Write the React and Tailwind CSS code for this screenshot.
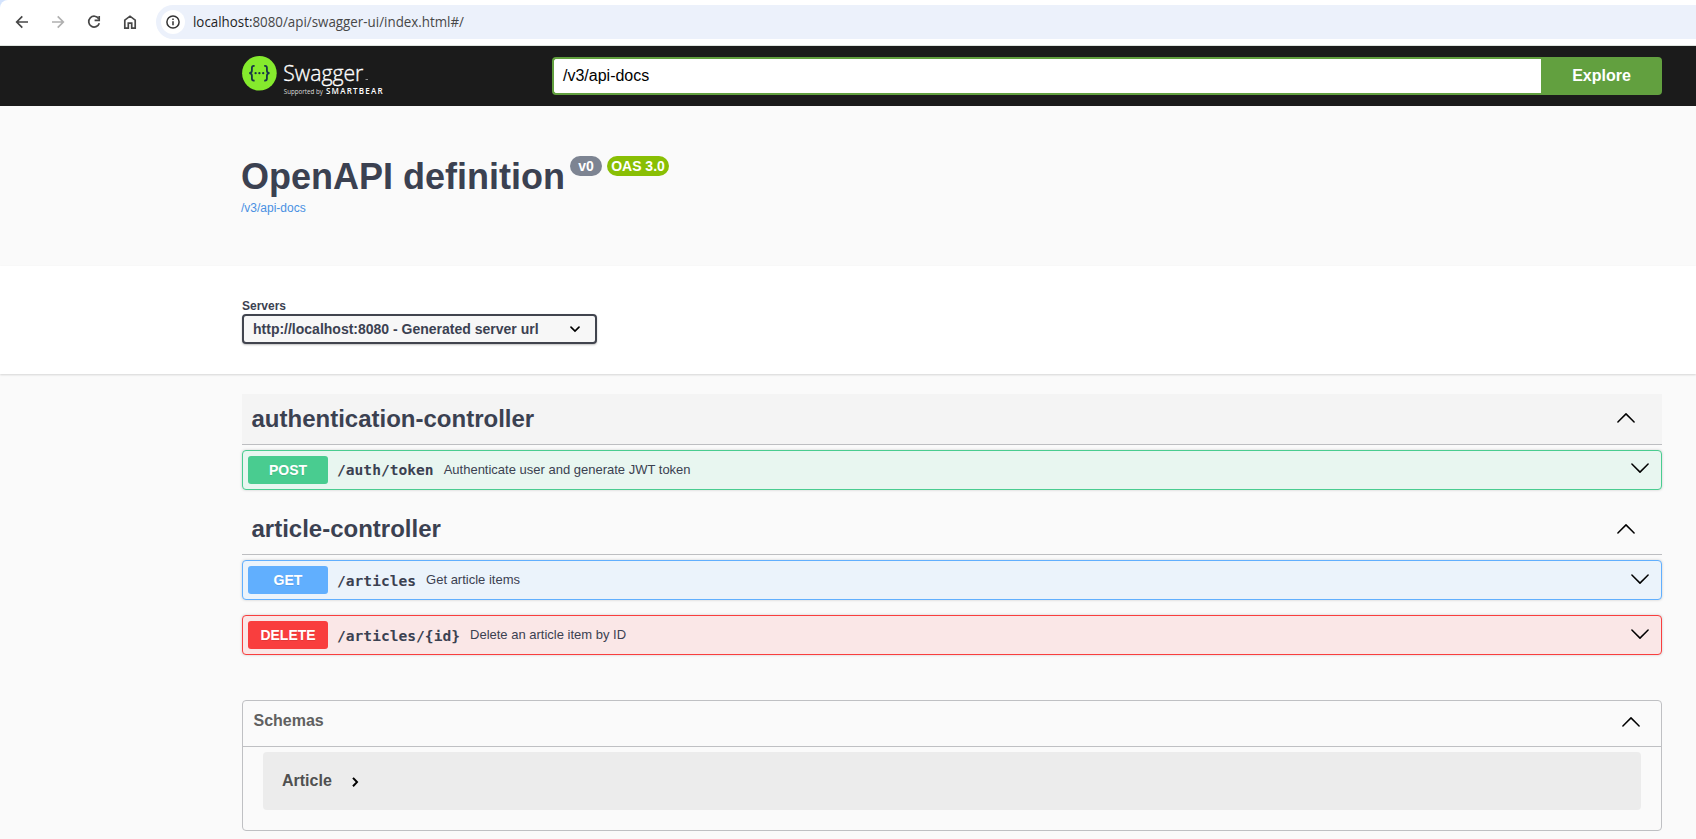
import React from "react";

function Chevron({ up, className }) {
  return (
    <svg className={className} width="20" height="20" viewBox="0 0 20 20" fill="none" stroke="#000" strokeWidth="1.5" strokeLinecap="round" strokeLinejoin="round">
      <path d={up ? "M1.9 14 10 5.9 18.1 14" : "M1.9 6 10 14.1 18.1 6"} />
    </svg>
  );
}

function BrowserBar() {
  return (
    <div className="h-[46px] bg-[#d3e3fd]">
      <div className="flex h-full items-start rounded-tl-lg border-b border-[#dfe5e0] bg-white pt-[5px]">
        <div className="flex h-[34px] w-[156px] shrink-0 items-center pl-[12px]">
          <svg width="20" height="20" viewBox="0 0 20 20" fill="none" stroke="#474747" strokeWidth="1.7" className="mr-4">
            <path d="M16 10H5M10.3 4.4 4.7 10l5.6 5.6" />
          </svg>
          <svg width="20" height="20" viewBox="0 0 20 20" fill="none" stroke="#b0b0b0" strokeWidth="1.7" className="mr-4">
            <path d="M4 10h11M9.7 4.4l5.6 5.6-5.6 5.6" />
          </svg>
          <svg width="20" height="20" viewBox="0 0 20 20" fill="none" stroke="#474747" strokeWidth="1.7" className="mr-4">
            <path d="M14.7 6.7A5.4 5.4 0 1 0 15.3 11.2" />
            <path d="M15.2 4v4.4h-4.6" />
          </svg>
          <svg width="20" height="20" viewBox="0 0 20 20" fill="none" stroke="#474747" strokeWidth="1.7">
            <path d="M4.8 8.2 10 4.2l5.2 4v8h-3.5v-5H8.3v5H4.8z" />
          </svg>
        </div>
        <div className="flex h-[34px] flex-1 items-center rounded-l-full bg-[#ecf1fb] pl-[5px]">
          <div className="mr-[8px] flex size-6 items-center justify-center rounded-full bg-white">
            <svg width="16" height="16" viewBox="0 0 16 16" fill="none" stroke="#333" strokeWidth="1.5">
              <circle cx="8" cy="8" r="6.1" />
              <path d="M8 7.2v4M8 4.6v1.5" />
            </svg>
          </div>
          <svg width="290" height="24" className="block">
            <text x="0" y="17" fontSize="14" textLength="271" lengthAdjust="spacingAndGlyphs" fontFamily="'Open Sans', 'Noto Sans', sans-serif" fill="#474747">
              <tspan fill="#1f1f1f">localhost:</tspan>8080/api/swagger-ui/index.html#/
            </text>
          </svg>
        </div>
      </div>
    </div>
  );
}

function Logo() {
  return (
    <svg width="150" height="44" viewBox="0 0 150 44" className="block">
      <circle cx="17.4" cy="19.2" r="17.3" fill="#85ea2d" />
      <g fill="none" stroke="#173647" strokeWidth="1.8">
        <path d="M12.6 11.8H11.8Q9.9 11.8 9.9 13.8V16.6Q9.9 19.2 7.2 19.2Q9.9 19.2 9.9 21.8V24.6Q9.9 26.6 11.8 26.6H12.6" />
        <path d="M22.2 11.8H23Q24.9 11.8 24.9 13.8V16.6Q24.9 19.2 27.6 19.2Q24.9 19.2 24.9 21.8V24.6Q24.9 26.6 23 26.6H22.2" />
      </g>
      <g fill="#173647">
        <circle cx="13.6" cy="19.2" r="1.15" />
        <circle cx="17.4" cy="19.2" r="1.15" />
        <circle cx="21.2" cy="19.2" r="1.15" />
      </g>
      <text x="41.3" y="26.5" fontSize="22" textLength="80" lengthAdjust="spacingAndGlyphs" fontFamily="'Open Sans', 'Noto Sans', sans-serif" fontWeight="300" fill="#fff" stroke="#fff" strokeWidth="0.35">Swagger</text>
      <path d="M123.5 25.5h2.5" stroke="#aaa" strokeWidth="0.8" />
      <text x="41.8" y="40" fontSize="6.8" textLength="39" lengthAdjust="spacingAndGlyphs" fontFamily="'Open Sans', sans-serif" fill="#ddd">Supported by</text>
      <text x="84" y="40" fontSize="8" textLength="56.5" fontFamily="'Open Sans', sans-serif" fontWeight="600" fill="#fff">SMARTBEAR</text>
    </svg>
  );
}

function TagHeading({ children, className, chevron }) {
  return (
    <div className={`flex items-center justify-between border-b border-[#bdbec1] pr-[26px] pl-[9.5px] ${className}`}>
      <h3 className="text-[24px] leading-7 font-bold">{children}</h3>
      <Chevron up className={chevron} />
    </div>
  );
}

function Operation({ method, path, summary, box, badge, text, chevron }) {
  return (
    <div className={`flex h-10 items-center rounded border pr-[11px] pl-[5px] shadow-[0_0_3px_rgba(0,0,0,0.19)] ${box}`}>
      <span className={`flex h-7 w-20 items-center justify-center rounded-[3px] text-[14px] font-bold text-white [text-shadow:0_1px_0_rgba(0,0,0,0.1)] ${badge}`}>{method}</span>
      <span className={`ml-[9px] font-['DejaVu_Sans_Mono',monospace] text-[14.6px] leading-5 font-bold ${text}`}>{path}</span>
      <span className="ml-[10px] text-[13px] leading-5">{summary}</span>
      <Chevron className={`relative ml-auto ${chevron}`} />
    </div>
  );
}

export default function App() {
  return (
    <div className="h-[839px] overflow-hidden bg-[#fafafa] font-['Liberation_Sans',Arial,sans-serif] text-[#3b4151]">
      <BrowserBar />
      <header className="flex h-[60px] items-center bg-[#1b1b1b] pr-[34px] pl-[242px]">
        <div className="w-[310px] self-start pt-[8px]">
          <Logo />
        </div>
        <div className="flex h-[38px] flex-1">
          <div className="flex flex-1 items-center rounded-l border-2 border-r-0 border-[#62a03f] bg-white pl-[9px] text-[16px] text-black">/v3/api-docs</div>
          <button className="w-[121px] rounded-r bg-[#62a03f] text-[16px] font-bold text-white">Explore</button>
        </div>
      </header>

      <section className="h-[160px] pt-[50px] pl-[241px]">
        <div className="flex items-start">
          <h1 className="text-[36px] leading-[42px] font-bold">OpenAPI definition</h1>
          <span className="ml-[5px] flex h-5 w-8 items-center justify-center rounded-full bg-[#7d8492] text-[14px] font-bold text-white">v0</span>
          <span className="ml-[5px] flex h-5 w-[62px] items-center justify-center rounded-full bg-[#89bf04] text-[14px] font-bold whitespace-nowrap text-white">OAS 3.0</span>
        </div>
        <a className="mt-[2px] block text-[12px] leading-[16px] text-[#4990e2]">/v3/api-docs</a>
      </section>

      <section className="h-[108px] bg-white pt-[32px] pl-[242px] shadow-[0_1px_2px_rgba(0,0,0,0.15)]">
        <div className="text-[12px] leading-[16px] font-bold">Servers</div>
        <div className="flex h-[30px] w-[355px] items-center justify-between rounded border-2 border-[#41444e] bg-[#f7f7f7] pr-[14px] pl-[9px] text-[14px] font-bold shadow-[0_1px_2px_rgba(0,0,0,0.25)]">
          http://localhost:8080 - Generated server url
          <svg width="12" height="12" viewBox="0 0 12 12" fill="none" stroke="#000" strokeWidth="1.7" strokeLinecap="round">
            <path d="M2 4.2 6 8l4-3.8" />
          </svg>
        </div>
      </section>

      <main className="pt-5 pr-[34px] pl-[242px]">
        <TagHeading className="h-[51px] bg-[#f4f4f4]" chevron="relative -top-px">authentication-controller</TagHeading>
        <div className="pt-[5px]">
          <Operation method="POST" path="/auth/token" summary="Authenticate user and generate JWT token" box="border-[#49cc90] bg-[#e8f6f0]" badge="bg-[#49cc90]" text="" chevron="-top-[2.5px]" />
        </div>
        <TagHeading className="mt-[14px] h-[51px]" chevron="">article-controller</TagHeading>
        <div className="flex flex-col gap-[15px] pt-[5px]">
          <Operation method="GET" path="/articles" summary="Get article items" box="border-[#61affe] bg-[#ebf3fb]" badge="bg-[#61affe]" text="pt-px" chevron="-top-[1.5px]" />
          <Operation method="DELETE" path="/articles/{id}" summary="Delete an article item by ID" box="border-[#f93e3e] bg-[#fae7e7]" badge="bg-[#f93e3e]" text="pt-px" chevron="-top-[1.5px]" />
        </div>

        <section className="mt-[45px] h-[131px] rounded border border-[#bfc0c3] text-[16px] font-bold">
          <div className="flex h-[46px] items-center justify-between border-b border-[#bfc0c3] pr-[20px] pl-[10.5px] text-[#606060]">
            <span className="relative -top-[3px]">Schemas</span>
            <Chevron up className="relative -top-[2px]" />
          </div>
          <div className="mx-5 mt-[5px] flex h-[58px] items-center rounded bg-[#ececec] pl-[19px] text-[#505050]">
            <span>Article</span>
            <svg width="12" height="12" viewBox="0 0 12 12" fill="none" stroke="#000" strokeWidth="2" className="relative top-px ml-[17px]">
              <path d="M4 1.9 8 6.1 4 10.3" />
            </svg>
          </div>
        </section>
      </main>
    </div>
  );
}
